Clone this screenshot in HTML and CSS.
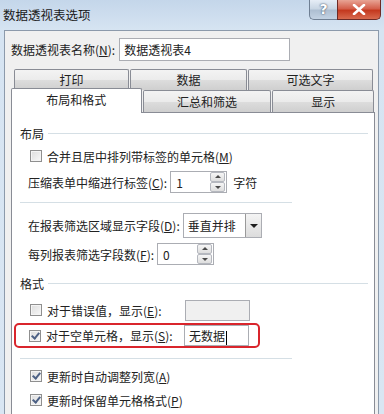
FILE: index.html
```html
<!DOCTYPE html>
<html lang="zh-CN">
<head>
  <meta charset="UTF-8">
  <title>数据透视表选项</title>
  <link rel="stylesheet" href="styles.css">
</head>
<body>

  <div class="window">
    <div class="titlebar">
      <span class="title">数据透视表选项</span>
      <div class="caption-btns">
        <span class="btn-help">?</span>
        <span class="btn-close">
          <svg width="14" height="11" viewBox="0 0 14 11"><path d="M2 1 L12 10 M12 1 L2 10" stroke="#fff" stroke-width="2.6" stroke-linecap="round"/></svg>
        </span>
      </div>
    </div>

    <div class="client">
      <div class="name-row">
        <span>数据透视表名称(<u>N</u>):</span>
        <div class="textbox name-box">数据透视表4</div>
      </div>

      <div class="tabs">
        <div class="tab-row back">
          <span class="tab t-print">打印</span>
          <span class="tab t-data">数据</span>
          <span class="tab t-alt">可选文字</span>
        </div>
        <div class="tab-row front">
          <span class="tab active t-layout">布局和格式</span>
          <span class="tab t-totals">汇总和筛选</span>
          <span class="tab t-display">显示</span>
        </div>
      </div>

      <div class="panel">
        <div class="group-head"><span>布局</span><i></i></div>

        <div class="row check-row">
          <span class="checkbox"></span>
          <span>合并且居中排列带标签的单元格(<u>M</u>)</span>
        </div>

        <div class="row field-row">
          <span>压缩表单中缩进行标签(<u>C</u>):</span>
          <div class="spinbox w57">
            <span class="value">1</span>
            <div class="spin"><b class="up"></b><b class="down"></b></div>
          </div>
          <span class="unit">字符</span>
        </div>

        <div class="sep"></div>

        <div class="row field-row r-filter">
          <span>在报表筛选区域显示字段(<u>D</u>):</span>
          <div class="combo">
            <span class="value">垂直并排</span>
            <span class="drop"></span>
          </div>
        </div>

        <div class="row field-row r-count">
          <span>每列报表筛选字段数(<u>F</u>):</span>
          <div class="spinbox w57">
            <span class="value">0</span>
            <div class="spin"><b class="up"></b><b class="down"></b></div>
          </div>
        </div>

        <div class="group-head g-format"><span>格式</span><i></i></div>

        <div class="row check-row r-error">
          <span class="checkbox"></span>
          <span class="lbl">对于错误值，显示(<u>E</u>):</span>
          <div class="textbox small disabled"></div>
        </div>

        <div class="row check-row r-empty">
          <span class="checkbox checked"></span>
          <span class="lbl">对于空单元格，显示(<u>S</u>):</span>
          <div class="textbox small">无数据<span class="caret"></span></div>
        </div>

        <div class="sep s2"></div>

        <div class="row check-row r-auto">
          <span class="checkbox checked"></span>
          <span>更新时自动调整列宽(<u>A</u>)</span>
        </div>

        <div class="row check-row">
          <span class="checkbox checked"></span>
          <span>更新时保留单元格格式(<u>P</u>)</span>
        </div>
      </div>
    </div>
  </div>

</body>
</html>
```

FILE: styles.css
```css
body {
  margin: 0;
  padding: 0;
  font-family: "Noto Sans CJK SC", "Noto Sans", sans-serif;
  font-size: 12px;
  color: #222;
  background: #d3e1f0;
}

u {
  text-decoration: underline;
  text-underline-offset: 1px;
}

.window {
  width: 384px;
  height: 414px;
  overflow: hidden;
  background: linear-gradient(180deg, #c4d6ea 0%, #d6e4f2 30px, #d9e6f3 100%);
  padding: 0 5px 0 4px;
  box-sizing: border-box;
}

.titlebar {
  height: 30px;
  display: flex;
  align-items: center;
  justify-content: space-between;
  margin-left: -1px;
}

.title {
  font-size: 12.5px;
  color: #1a1a1a;
  margin-top: -2px;
}

.caption-btns {
  display: flex;
  align-self: flex-start;
  margin-right: -2px;
}

.btn-help {
  width: 28px;
  height: 20px;
  box-sizing: border-box;
  border: 1px solid #6f7f93;
  border-top: none;
  border-right: none;
  border-radius: 0 0 0 5px;
  background: linear-gradient(180deg, #e6edf6 0%, #c9d6e4 45%, #aebfd2 55%, #c3d2e3 100%);
  color: #fff;
  font-family: "DejaVu Sans", sans-serif;
  font-weight: bold;
  font-size: 14px;
  text-align: center;
  line-height: 19px;
  text-shadow: 0 0 2px #4a5a70, 0 0 1px #4a5a70;
}

.btn-close {
  width: 44px;
  height: 20px;
  box-sizing: border-box;
  border: 1px solid #6e2a25;
  border-top: none;
  border-radius: 0 0 5px 0;
  background: linear-gradient(180deg, #e8a495 0%, #d4604c 45%, #c4391f 55%, #d86a4e 100%);
  display: flex;
  align-items: center;
  justify-content: center;
}

.client {
  background: #f0f0f0;
  border: 1px solid #8c9aab;
  height: 400px;
  padding: 6px 0 0 6px;
  box-sizing: border-box;
}

.name-row {
  display: flex;
  align-items: center;
  gap: 4px;
  height: 24px;
}

.textbox {
  background: #fff;
  border: 1px solid #abadb3;
  box-sizing: border-box;
  height: 23px;
  line-height: 21px;
  padding-left: 4px;
}

.name-box {
  width: 171px;
}

/* tabs */
.tabs {
  margin-top: 8px;
  width: 363px;
}

.tab-row {
  display: flex;
  height: 22px;
  align-items: flex-end;
}

.tab-row.back {
  padding-left: 3px;
  height: 21px;
}

.tab {
  box-sizing: border-box;
  height: 21px;
  border: 1px solid #898c95;
  border-bottom: none;
  border-radius: 2px 2px 0 0;
  background: linear-gradient(180deg, #f3f3f3 0%, #ebebeb 50%, #dddddd 51%, #cfcfcf 100%);
  text-align: center;
  line-height: 20px;
  margin-right: 1px;
}

.tab-row.front .tab {
  height: 22px;
  line-height: 22px;
}

.tab.active {
  background: #fff;
  height: 25px !important;
  margin-bottom: -1px;
  position: relative;
  line-height: 22px !important;
  padding-bottom: 3px;
}

.t-print { width: 115px; }
.t-data { width: 117px; }
.t-alt { width: 125px; }
.t-layout { width: 131px; }
.t-totals { width: 129px; }
.t-display { width: 102px; margin-right: 0; }

/* panel */
.panel {
  background: #fff;
  border: 1px solid #898c95;
  width: 364px;
  height: 320px;
  box-sizing: border-box;
  padding: 9px 6px 0 8px;
}

.group-head {
  display: flex;
  align-items: center;
  gap: 4px;
  height: 22px;
}

.group-head i {
  flex: 1;
  height: 1px;
  background: #d5dfe5;
}

.g-format {
  height: 28px;
}

.row {
  display: flex;
  align-items: center;
  white-space: nowrap;
}

.check-row {
  height: 24px;
  padding-left: 10px;
  gap: 5px;
}

.field-row {
  height: 28px;
  padding-left: 8px;
  gap: 3px;
}

.r-filter {
  margin-top: 8px;
}

.r-count {
  height: 30px;
  margin-top: 0;
}

.sep {
  width: 272px;
  height: 1px;
  background: #d5dfe5;
  margin-top: 6px;
}

.sep.s2 {
  margin-top: 10px;
}

.r-auto {
  margin-top: 5px;
}

.checkbox {
  width: 12px;
  height: 12px;
  box-sizing: border-box;
  border: 1px solid #8f8f8f;
  background: linear-gradient(135deg, #dcdcdc, #f8f8f8);
  box-shadow: inset 0 0 0 1px #f4f4f4;
  position: relative;
  flex: none;
}

.checkbox.checked::after {
  content: "";
  position: absolute;
  left: 3px;
  top: 0px;
  width: 3px;
  height: 6px;
  border: solid #4d6185;
  border-width: 0 2px 2px 0;
  transform: rotate(40deg);
}

.spinbox {
  display: flex;
  height: 22px;
  box-sizing: border-box;
  border: 1px solid #abadb3;
  background: #fff;
  align-items: center;
  justify-content: space-between;
  padding-left: 5px;
}

.w57 {
  width: 57px;
}

.spin {
  display: flex;
  flex-direction: column;
  width: 15px;
  height: 20px;
  margin-right: 1px;
}

.spin b {
  flex: 1;
  border: 1px solid #b5b8bf;
  background: linear-gradient(180deg, #f6f6f6, #dedede);
  border-radius: 2px;
  position: relative;
}

.spin b::after {
  content: "";
  position: absolute;
  left: 4px;
  border-left: 3px solid transparent;
  border-right: 3px solid transparent;
}

.spin .up::after {
  top: 2px;
  border-bottom: 3px solid #4a4a4a;
}

.spin .down::after {
  top: 3px;
  border-top: 3px solid #4a4a4a;
}

.unit {
  margin-left: 3px;
}

.combo {
  display: flex;
  width: 79px;
  height: 25px;
  box-sizing: border-box;
  border: 1px solid #abadb3;
  background: #fff;
  align-items: center;
  justify-content: space-between;
  padding-left: 4px;
}

.drop {
  width: 16px;
  height: 23px;
  box-sizing: border-box;
  border-left: 1px solid #9a9a9a;
  background: linear-gradient(180deg, #f4f4f4, #dcdcdc);
  position: relative;
}

.drop::after {
  content: "";
  position: absolute;
  left: 4px;
  top: 10px;
  border-left: 4px solid transparent;
  border-right: 4px solid transparent;
  border-top: 4px solid #1e1e1e;
}

.lbl {
  width: 133px;
  flex: none;
}

.textbox.small {
  width: 65px;
  height: 21px;
  line-height: 19px;
}

.textbox.disabled {
  background: #f0f0f0;
}

.r-error {
  height: 26px;
}

.r-empty {
  height: 25px;
  box-sizing: border-box;
  border: 2px solid #d9252c;
  border-radius: 5px;
  margin-left: -6px;
  width: 246px;
  padding-left: 13px;
}

.caret {
  display: inline-block;
  width: 1px;
  height: 14px;
  background: #000;
  vertical-align: middle;
  margin-left: 1px;
}
```
